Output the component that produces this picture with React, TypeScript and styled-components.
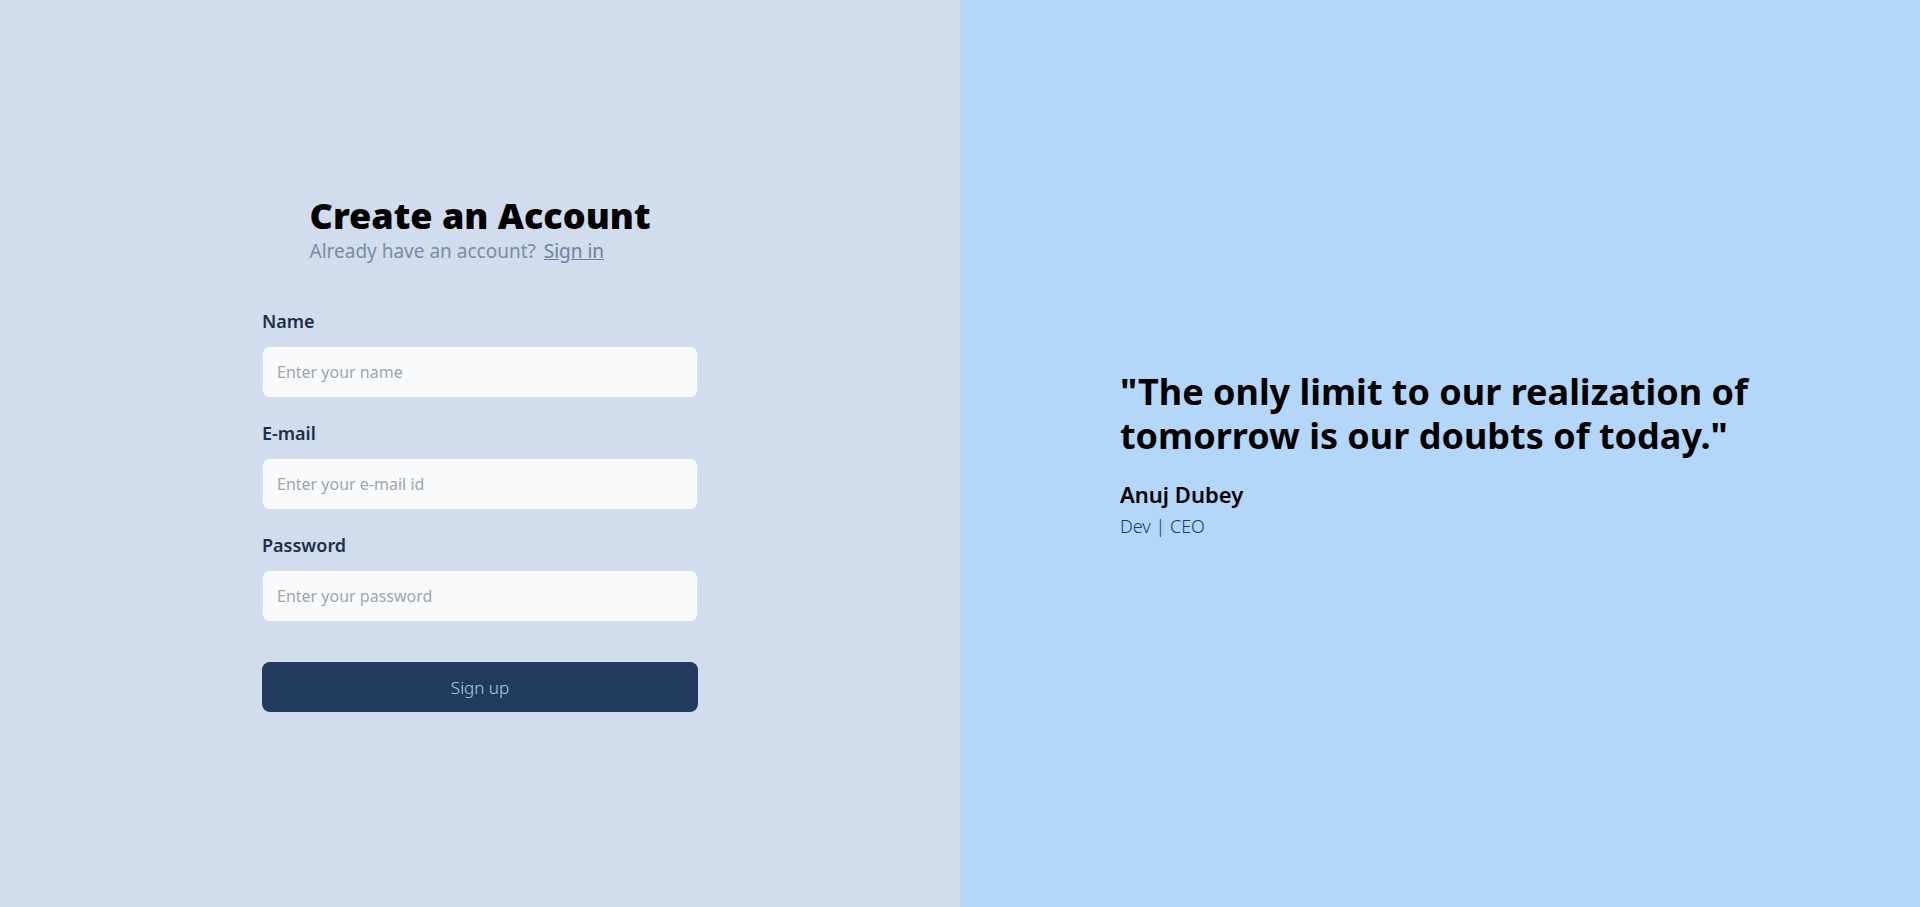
import React from 'react';
import styled, { createGlobalStyle } from 'styled-components';

const GlobalStyle = createGlobalStyle`
  * {
    box-sizing: border-box;
  }
  html, body {
    margin: 0;
    padding: 0;
  }
  body {
    font-family: 'Noto Sans', 'Open Sans', sans-serif;
  }
`;

const Page = styled.div`
  display: grid;
  grid-template-columns: 1fr 1fr;
  height: 100vh;
  min-height: 907px;
`;

const LeftPanel = styled.section`
  display: flex;
  align-items: center;
  justify-content: center;
  background-color: #d1dced;
`;

const RightPanel = styled.section`
  display: flex;
  align-items: center;
  justify-content: center;
  background-color: #b4d6f9;
`;

const FormBlock = styled.div`
  display: flex;
  flex-direction: column;
  width: 436px;
`;

const Header = styled.div`
  align-self: center;
  margin-bottom: 45px;
`;

const Title = styled.h1`
  margin: 0;
  font-size: 36px;
  font-weight: 900;
  line-height: 42px;
  color: #000;
`;

const Subtitle = styled.p`
  margin: 1px 0 0;
  font-size: 19px;
  line-height: 26px;
  color: #7b8ca6;
`;

const SignInLink = styled.a`
  margin-left: 8px;
  color: #6f82a0;
  text-decoration: underline;
  cursor: pointer;
`;

const Field = styled.div`
  display: flex;
  flex-direction: column;
  margin-bottom: 23px;
`;

const Label = styled.label`
  font-size: 18px;
  font-weight: 600;
  line-height: 24px;
  color: #1e2f4a;
  margin-bottom: 13px;
`;

const Input = styled.input`
  height: 52px;
  padding: 0 14px;
  border: 1px solid #d9dee6;
  border-radius: 8px;
  background-color: #f8fafc;
  font-family: inherit;
  font-size: 16px;
  color: #1e2f4a;
  outline: none;

  &::placeholder {
    color: #a0a5af;
  }
`;

const SubmitButton = styled.button`
  margin-top: 17px;
  height: 50px;
  border: 0;
  border-radius: 8px;
  background-color: #223a5b;
  color: #b9cde6;
  font-family: inherit;
  font-size: 17px;
  font-weight: 300;
  cursor: pointer;
`;

const QuoteBlock = styled.div`
  width: 640px;
`;

const Quote = styled.h2`
  margin: 0;
  max-width: 640px;
  font-size: 36px;
  font-weight: 700;
  line-height: 44px;
  color: #000;
`;

const Author = styled.p`
  margin: 21px 0 0;
  font-size: 22px;
  font-weight: 600;
  line-height: 30px;
  color: #000;
`;

const Role = styled.p`
  margin: 5px 0 0;
  font-size: 18px;
  font-weight: 300;
  line-height: 24px;
  color: #1e3a5f;
`;

const fields = [
  { id: 'name', label: 'Name', type: 'text', placeholder: 'Enter your name' },
  { id: 'email', label: 'E-mail', type: 'email', placeholder: 'Enter your e-mail id' },
  { id: 'password', label: 'Password', type: 'password', placeholder: 'Enter your password' },
];

const App: React.FC = () => {
  return (
    <>
      <GlobalStyle />
      <Page>
        <LeftPanel>
          <FormBlock>
            <Header>
              <Title>Create an Account</Title>
              <Subtitle>
                Already have an account?
                <SignInLink>Sign in</SignInLink>
              </Subtitle>
            </Header>
            {fields.map((field) => (
              <Field key={field.id}>
                <Label htmlFor={field.id}>{field.label}</Label>
                <Input id={field.id} type={field.type} placeholder={field.placeholder} />
              </Field>
            ))}
            <SubmitButton type="button">Sign up</SubmitButton>
          </FormBlock>
        </LeftPanel>
        <RightPanel>
          <QuoteBlock>
            <Quote>"The only limit to our realization of tomorrow is our doubts of today."</Quote>
            <Author>Anuj Dubey</Author>
            <Role>Dev | CEO</Role>
          </QuoteBlock>
        </RightPanel>
      </Page>
    </>
  );
};

export default App;
